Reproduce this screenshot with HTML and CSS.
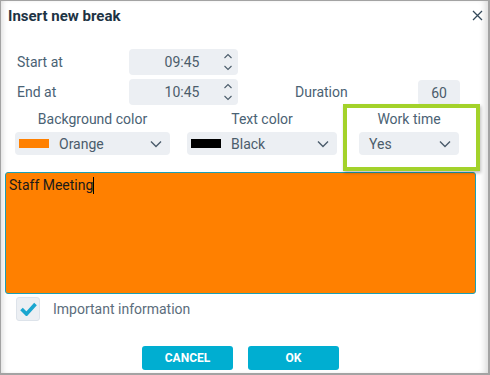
FILE: index.html
```html
<!DOCTYPE html>
<html lang="en">
<head>
    <meta charset="UTF-8">
    <title>Insert new break</title>
    <link rel="stylesheet" href="styles.css">
</head>
<body>
    <div class="dialog">
        <div class="dialog-header">
            <h2>Insert new break</h2>
            <span class="close-x">
                <svg width="11" height="11" viewBox="0 0 11 11"><path d="M1 1L10 10M10 1L1 10" stroke="#34495a" stroke-width="1.3"/></svg>
            </span>
        </div>

        <div class="time-row">
            <label class="row-label">Start at</label>
            <div class="field time-field">
                <span class="time-value">09:45</span>
                <span class="spinner">
                    <svg width="10" height="22" viewBox="0 0 10 22"><path d="M1.5 7L5 3.5L8.5 7M1.5 15L5 18.5L8.5 15" fill="none" stroke="#4b5c6b" stroke-width="1.1"/></svg>
                </span>
            </div>
        </div>
        <div class="time-row">
            <label class="row-label">End at</label>
            <div class="field time-field">
                <span class="time-value">10:45</span>
                <span class="spinner">
                    <svg width="10" height="22" viewBox="0 0 10 22"><path d="M1.5 7L5 3.5L8.5 7M1.5 15L5 18.5L8.5 15" fill="none" stroke="#4b5c6b" stroke-width="1.1"/></svg>
                </span>
            </div>
            <label class="duration-label">Duration</label>
            <div class="field duration-field">60</div>
        </div>

        <div class="select-row">
            <div class="select-col col-bg">
                <label>Background color</label>
                <div class="field select-field">
                    <span class="swatch swatch-orange"></span>
                    <span class="select-text">Orange</span>
                    <svg class="chevron" width="12" height="8" viewBox="0 0 12 8"><path d="M1 1.5L6 6.5L11 1.5" fill="none" stroke="#4b5c6b" stroke-width="1.4"/></svg>
                </div>
            </div>
            <div class="select-col col-text">
                <label>Text color</label>
                <div class="field select-field">
                    <span class="swatch swatch-black"></span>
                    <span class="select-text">Black</span>
                    <svg class="chevron" width="12" height="8" viewBox="0 0 12 8"><path d="M1 1.5L6 6.5L11 1.5" fill="none" stroke="#4b5c6b" stroke-width="1.4"/></svg>
                </div>
            </div>
            <div class="select-col col-work">
                <label>Work time</label>
                <div class="field select-field">
                    <span class="select-text">Yes</span>
                    <svg class="chevron" width="12" height="8" viewBox="0 0 12 8"><path d="M1 1.5L6 6.5L11 1.5" fill="none" stroke="#4b5c6b" stroke-width="1.4"/></svg>
                </div>
                <div class="highlight"></div>
            </div>
        </div>

        <div class="note-box">Staff Meeting<span class="caret"></span></div>

        <div class="check-row">
            <span class="checkbox">
                <svg width="17" height="14" viewBox="0 0 17 14"><path d="M1.5 7L6.5 12L15.5 2" fill="none" stroke="#1aa6cf" stroke-width="3.6"/></svg>
            </span>
            <span class="check-label">Important information</span>
        </div>

        <div class="button-row">
            <button class="btn">CANCEL</button>
            <button class="btn">OK</button>
        </div>
    </div>
</body>
</html>
```

FILE: styles.css
```css
body {
    margin: 0;
    font-family: Roboto, "Liberation Sans", sans-serif;
    background-color: #ffffff;
}
.dialog {
    width: 490px;
    height: 375px;
    box-sizing: border-box;
    border: 1px solid #a3a3a3;
    border-bottom-width: 2px;
    border-right-width: 2px;
    background: #ffffff;
    box-shadow: inset 5px 0 5px -3px rgba(0, 0, 0, 0.12), inset -6px 0 6px -3px rgba(0, 0, 0, 0.14);
    position: relative;
}
.dialog-header {
    display: flex;
    justify-content: space-between;
    align-items: center;
    height: 30px;
    padding: 0 5px 0 7px;
    margin-bottom: 18px;
}
.dialog-header h2 {
    margin: 0;
    font-size: 15px;
    font-weight: 700;
    color: #1d3344;
}
.close-x {
    display: flex;
    margin-top: -2px;
}
.time-row {
    display: flex;
    align-items: center;
    height: 26px;
    margin-left: 16px;
}
.time-row + .time-row {
    margin-top: 4px;
}
.row-label {
    width: 112px;
    font-size: 14px;
    color: #4a6274;
}
.field {
    background-color: #eceff3;
    border-radius: 4px;
    color: #4b5c6b;
    font-size: 14px;
    box-sizing: border-box;
}
.time-field {
    width: 109px;
    height: 26px;
    display: flex;
    align-items: center;
}
.time-value {
    flex: 1;
    text-align: center;
    padding-left: 12px;
}
.spinner {
    display: flex;
    margin-right: 5px;
}
.duration-label {
    margin-left: 57px;
    width: 123px;
    font-size: 14px;
    color: #4a6274;
}
.duration-field {
    width: 42px;
    height: 25px;
    display: flex;
    align-items: center;
    justify-content: center;
    margin-top: 1px;
}
.select-row {
    display: flex;
    margin-top: 3px;
    margin-left: 14px;
}
.select-col {
    display: flex;
    flex-direction: column;
    align-items: center;
}
.select-col label {
    font-size: 14px;
    color: #4a6274;
    height: 22px;
    line-height: 22px;
    margin-bottom: 2px;
}
.col-bg {
    width: 155px;
}
.col-text {
    width: 150px;
    margin-left: 17px;
}
.col-work {
    width: 100px;
    margin-left: 22px;
    position: relative;
}
.select-field {
    width: 100%;
    height: 23px;
    display: flex;
    align-items: center;
    padding: 0 8px 0 4px;
}
.col-work .select-field {
    padding-left: 10px;
}
.swatch {
    width: 30px;
    height: 9px;
    margin-right: 10px;
}
.swatch-orange {
    background-color: #ff8000;
}
.swatch-black {
    background-color: #000000;
}
.select-text {
    flex: 1;
}
.highlight {
    position: absolute;
    left: -16px;
    top: -4px;
    width: 137px;
    height: 67px;
    box-sizing: border-box;
    border: 4px solid #a3d22a;
    box-shadow: 1px 2px 3px rgba(0, 0, 0, 0.25);
}
.note-box {
    margin: 17px 0 0 4px;
    width: 471px;
    height: 122px;
    box-sizing: border-box;
    background-color: #ff8000;
    border: 1px solid #1a9fb5;
    border-radius: 3px;
    padding: 4px 3px;
    font-size: 14px;
    color: #1a1a1a;
}
.caret {
    display: inline-block;
    width: 1px;
    height: 17px;
    background-color: #000000;
    vertical-align: -4px;
}
.check-row {
    display: flex;
    align-items: center;
    margin: 3px 0 0 15px;
}
.checkbox {
    width: 24px;
    height: 24px;
    box-sizing: border-box;
    border: 1px solid #dde3ea;
    border-radius: 3px;
    background-color: #eceff3;
    display: flex;
    align-items: center;
    justify-content: center;
}
.check-label {
    margin-left: 13px;
    font-size: 14px;
    color: #5b6d7c;
}
.button-row {
    display: flex;
    justify-content: center;
    gap: 15px;
    margin-top: 25px;
    padding-right: 8px;
}
.btn {
    width: 91px;
    height: 24px;
    border: none;
    border-radius: 3px;
    background-color: #00aed1;
    color: #ffffff;
    font-family: Roboto, "Liberation Sans", sans-serif;
    font-size: 12px;
    font-weight: 700;
    cursor: pointer;
}
```
